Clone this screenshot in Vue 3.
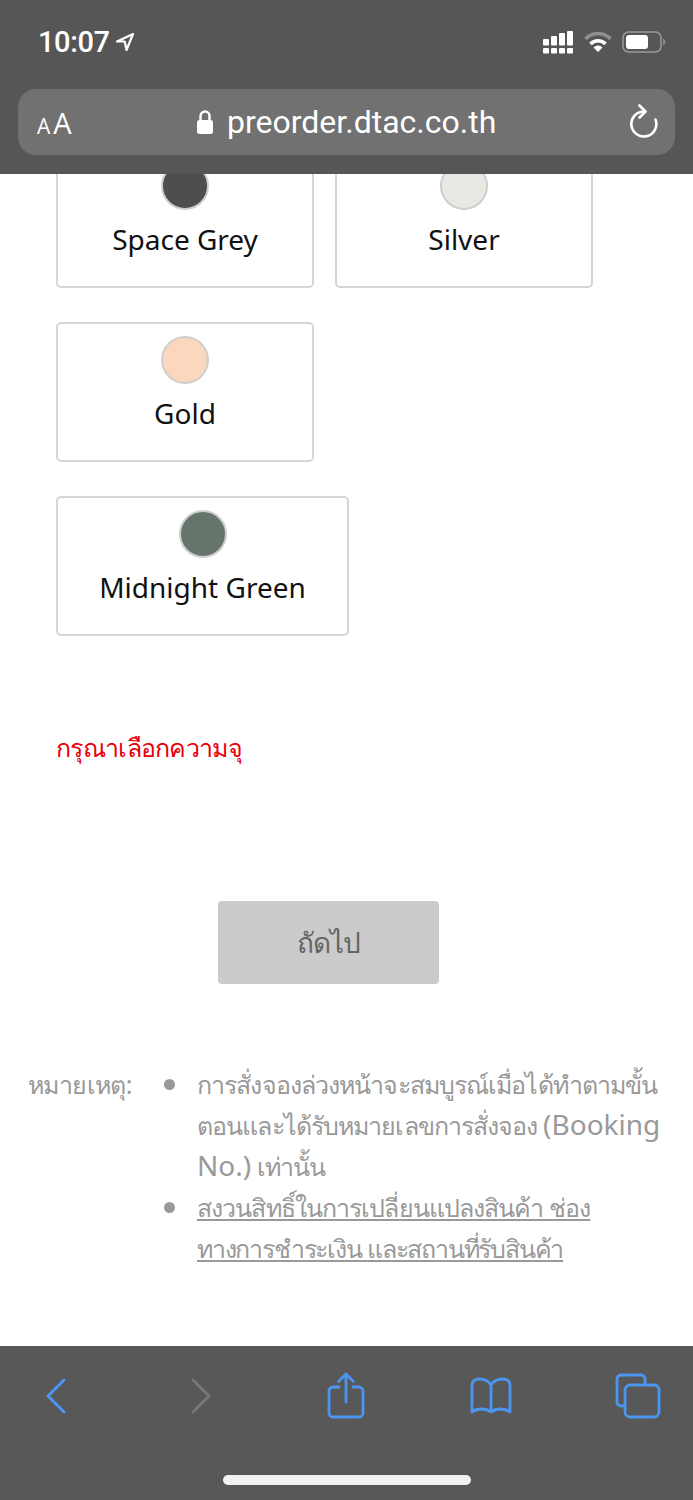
<template>
  <div class="phone">
    <header class="top">
      <div class="status">
        <div class="clock">
          <span>10:07</span>
          <svg width="20" height="20" viewBox="0 0 20 20"><path d="M18 2 2 9.500h7.700L11.500 18z" fill="none" stroke="#fff" stroke-width="2.200" stroke-linejoin="round"/></svg>
        </div>
        <div class="status-icons">
          <svg width="31" height="23" viewBox="0 0 31 23" fill="#fff">
            <rect x="0" y="17" width="6" height="5.500" rx="1"/>
            <rect x="8" y="17" width="6" height="5.500" rx="1"/>
            <rect x="16" y="17" width="6" height="5.500" rx="1"/>
            <rect x="24" y="17" width="6" height="5.500" rx="1"/>
            <rect x="0" y="8" width="6" height="6.500" rx="1"/>
            <rect x="8" y="5" width="6" height="9.500" rx="1"/>
            <rect x="16" y="2" width="6" height="12.500" rx="1"/>
            <rect x="24" y="0" width="6" height="14.500" rx="1"/>
          </svg>
          <svg width="28" height="21" viewBox="0 0 28 21" fill="none">
            <path d="M1.500 7a17 17 0 0 1 25 0" stroke="#8f8f8f" stroke-width="3.500"/>
            <path d="M6.500 12a10.500 10.500 0 0 1 15 0" stroke="#fff" stroke-width="3.500"/>
            <path d="m14 20-4.500-4.500a6.300 6.300 0 0 1 9 0z" fill="#fff"/>
          </svg>
          <svg width="45" height="22" viewBox="0 0 45 22">
            <rect x="1" y="1" width="38" height="20" rx="5.500" fill="none" stroke="#999" stroke-width="1.500"/>
            <rect x="4" y="4" width="22" height="14" rx="3" fill="#fff"/>
            <path d="M41 7.500c1.500.5 2.500 1.800 2.500 3.500s-1 3-2.500 3.500z" fill="#888"/>
          </svg>
        </div>
      </div>
      <div class="url-bar">
        <span class="aa"><small>A</small>A</span>
        <div class="address">
          <svg width="18" height="24" viewBox="0 0 18 24"><path d="M4.500 11V6a4.500 4.500 0 0 1 9 0v5" fill="none" stroke="#fff" stroke-width="2.400"/><rect x="1" y="10" width="16" height="14" rx="2.500" fill="#fff"/></svg>
          <span>preorder.dtac.co.th</span>
        </div>
        <svg class="reload" width="30" height="36" viewBox="0 0 30 36" fill="none" stroke="#fff" stroke-width="2.600" stroke-linecap="round" stroke-linejoin="round">
          <path d="M16 7.500a12.500 12.500 0 1 0 11.500 8"/>
          <path d="m11.500 1.500 6 6-6 6"/>
        </svg>
      </div>
    </header>

    <main class="page">
      <div class="content">
        <div v-for="(row, i) in colourRows" :key="i" class="colour-row">
          <button v-for="c in row" :key="c.name" class="colour-card" :class="c.size">
            <span class="dot" :style="{ background: c.hex }"></span>
            <span class="colour-name">{{ c.name }}</span>
          </button>
        </div>

        <p class="error">กรุณาเลือกความจุ</p>

        <div class="next-wrap">
          <button class="next" disabled>ถัดไป</button>
        </div>

        <div class="notes">
          <span class="notes-label">หมายเหตุ:</span>
          <ul>
            <li>การสั่งจองล่วงหน้าจะสมบูรณ์เมื่อได้ทำตามขั้น<br>ตอนและได้รับหมายเลขการสั่งจอง <span class="lat">(Booking</span><br><span class="lat">No.)</span> เท่านั้น</li>
            <li><a>สงวนสิทธิ์ในการเปลี่ยนแปลงสินค้า ช่อง<br><span class="tight">ทางการชำระเงิน และสถานที่รับสินค้า</span></a></li>
          </ul>
        </div>
      </div>
    </main>

    <footer class="bottom">
      <div class="tools">
        <svg width="24" height="40" viewBox="0 0 24 40" fill="none" stroke="#4a96f0" stroke-width="3" stroke-linecap="round" stroke-linejoin="round"><path d="M20 4 4 20l16 16"/></svg>
        <svg width="24" height="40" viewBox="0 0 24 40" fill="none" stroke="#777" stroke-width="3" stroke-linecap="round" stroke-linejoin="round"><path d="m4 4 16 16L4 36"/></svg>
        <svg width="38" height="48" viewBox="0 0 38 48" fill="none" stroke="#4a96f0" stroke-width="2.800" stroke-linecap="round" stroke-linejoin="round"><path d="M12 15H6a4 4 0 0 0-4 4v22a4 4 0 0 0 4 4h26a4 4 0 0 0 4-4V19a4 4 0 0 0-4-4h-6"/><path d="M19 30V2M11.500 9.500 19 2l7.500 7.500"/></svg>
        <svg width="44" height="38" viewBox="0 0 44 38" fill="none" stroke="#4a96f0" stroke-width="2.800" stroke-linecap="round" stroke-linejoin="round"><path d="M22 8C19 3 14 2 10 2c-4 0-7 2-7 6v27c5-4 14-4 19 0 5-4 14-4 19 0V8c0-4-3-6-7-6-4 0-9 1-12 6zM22 8v27"/></svg>
        <svg width="46" height="46" viewBox="0 0 46 46" fill="none" stroke="#4a96f0" stroke-width="2.800" stroke-linecap="round" stroke-linejoin="round"><path d="M8 33H6a4 4 0 0 1-4-4V6a4 4 0 0 1 4-4h20a4 4 0 0 1 4 4v5"/><rect x="10" y="12" width="34" height="32" rx="5"/></svg>
      </div>
      <div class="home-bar"></div>
    </footer>
  </div>
</template>

<script setup>
const colourRows = [
  [
    { name: 'Space Grey', hex: '#4f4e4d', size: 'normal' },
    { name: 'Silver', hex: '#e9e9e3', size: 'normal' }
  ],
  [{ name: 'Gold', hex: '#fad7bd', size: 'normal' }],
  [{ name: 'Midnight Green', hex: '#66756b', size: 'wide' }]
]
</script>

<style>
html, body { margin: 0; background: #fff; }
</style>

<style scoped>
.phone {
  width: 693px; height: 1500px;
  display: flex; flex-direction: column;
  overflow: hidden;
  font-family: "Noto Sans", "Open Sans", sans-serif;
}

.top { height: 174px; flex: none; background: #565656; color: #fff; box-sizing: border-box; padding: 0 18px; position: relative; z-index: 1; }
.status { height: 89px; display: flex; justify-content: space-between; align-items: center; padding: 0 9px 5px 20px; box-sizing: border-box; }
.clock { display: flex; align-items: center; gap: 5px; font: 500 29px Roboto, sans-serif; letter-spacing: -0.4px; }
.status-icons { display: flex; align-items: center; gap: 10px; margin-right: -1px; }
.url-bar { height: 66px; background: #717171; border-radius: 18px; display: flex; align-items: center; justify-content: space-between; padding: 0 17px 0 19px; position: relative; }
.aa { font: 400 29px "Open Sans", sans-serif; line-height: 1; }
.aa small { font-size: 21px; margin-right: 3px; }
.address { position: absolute; left: 178px; top: 0; height: 66px; display: flex; align-items: center; gap: 13px; font: 400 32px Roboto, sans-serif; }

.page { flex: 1; min-height: 0; overflow: hidden; background: #fff; }
.content { margin-top: -26px; }
.colour-row { display: flex; gap: 21px; padding-left: 56px; margin-bottom: 34px; }
.colour-card {
  height: 140px; box-sizing: border-box;
  background: #fff; border: 2px solid #d6d6d6; border-radius: 5px;
  padding: 12px 0 0;
  display: flex; flex-direction: column; align-items: center;
  font-family: inherit; color: #111;
}
.colour-card.normal { width: 258px; }
.colour-card.wide { width: 293px; }
.dot { width: 48px; height: 48px; border-radius: 50%; border: 2px solid #cfcfcf; box-sizing: border-box; }
.colour-name { font-size: 28px; line-height: 40px; margin-top: 9px; }

.error { margin: 91px 0 0 56px; color: #ea0008; font-size: 25px; letter-spacing: -0.7px; line-height: 40px; }
.next-wrap { display: flex; justify-content: center; padding-top: 134px; margin-left: -36px; }
.next { width: 221px; height: 83px; background: #cbcbcb; border: 0; border-radius: 4px; color: #666; font: 400 28px "Noto Sans", sans-serif; letter-spacing: -1px; }

.notes { margin-top: 80px; padding-left: 28px; display: flex; color: #999; font-size: 25px; letter-spacing: -0.9px; line-height: 41px; }
.notes-label { width: 134px; flex: none; white-space: nowrap; letter-spacing: -0.6px; }
.notes ul { margin: 0; padding: 0 0 0 35px; white-space: nowrap; list-style: none; }
.notes li { position: relative; height: auto; }
.notes li::before { content: ""; position: absolute; left: -33px; top: 15px; width: 11px; height: 11px; border-radius: 50%; background: #999; }
.notes a { text-decoration: underline; }
.lat { font-size: 28px; letter-spacing: 0; line-height: 1; }
.tight { letter-spacing: -1.2px; }

.bottom { height: 154px; flex: none; background: #585858; position: relative; }
.tools { display: grid; grid-template-columns: 145px 138px 142px 146px auto; align-items: center; padding: 25px 0 0 44px; height: 50px; }
.home-bar { position: absolute; left: 223px; top: 129px; width: 248px; height: 10px; background: #f2f2f2; border-radius: 5px; }
</style>
